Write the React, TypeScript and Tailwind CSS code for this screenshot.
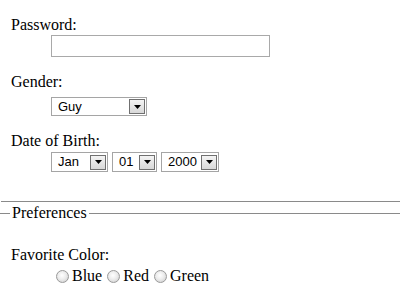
import React from 'react';

// little classic dropdown with a boxed arrow button
const Dropdown = ({ value, className }: { value: string; className: string }) => (
  <div
    className={`flex items-center justify-between border border-[#a5a5a5] bg-white pl-[6px] pr-[1px] font-['Liberation_Sans',Arial,sans-serif] text-[13px] leading-[15px] text-black ${className}`}
  >
    <span className="pb-[1px]">{value}</span>
    <span className="flex h-[15px] w-[16px] items-center justify-center border border-[#707070] bg-linear-to-b from-[#f4f4f4] to-[#d8d8d8]">
      <svg width="7" height="4" viewBox="0 0 7 4">
        <path d="M0 0h7L3.5 4z" fill="#000" />
      </svg>
    </span>
  </div>
);

const Radio = ({ label }: { label: string }) => (
  <label className="flex items-center">
    <span className="h-[13px] w-[13px] rounded-full border border-[#9a9a9a] bg-[radial-gradient(circle_at_45%_40%,#ffffff_0%,#ececec_45%,#c8c8c8_100%)]" />
    <span className="ml-[3px]">{label}</span>
  </label>
);

export default function App() {
  return (
    <div className="h-[300px] w-[400px] overflow-hidden bg-white font-['Liberation_Serif','Times_New_Roman',serif] text-[16px] leading-[18px] text-black">
      <div className="pl-[11px] pt-[16px]">
        <div>Password:</div>
        <div className="ml-[40px] mt-[1px] h-[22px] w-[219px] border border-[#a9a9a9] bg-white" />

        <div className="mt-[16px]">Gender:</div>
        <Dropdown value="Guy" className="ml-[40px] mt-[6px] h-[19px] w-[96px]" />

        <div className="mt-[16px]">Date of Birth:</div>
        <div className="ml-[40px] mt-[2px] flex gap-[4px]">
          <Dropdown value="Jan" className="h-[20px] w-[57px]" />
          <Dropdown value="01" className="h-[20px] w-[45px]" />
          <Dropdown value="2000" className="h-[20px] w-[58px]" />
        </div>
      </div>

      <hr className="ml-[1px] mt-[29px] border-[#8a8a8a]" />

      <fieldset className="mt-[2px] border-0 border-t border-[#8a8a8a]">
        <legend className="ml-[10px] px-[2px]">Preferences</legend>
        <div className="pl-[11px]">
          <div className="mt-[24px]">Favorite Color:</div>
          <div className="ml-[45px] mt-[3px] flex gap-[5px]">
            <Radio label="Blue" />
            <Radio label="Red" />
            <Radio label="Green" />
          </div>
        </div>
      </fieldset>
    </div>
  );
}
